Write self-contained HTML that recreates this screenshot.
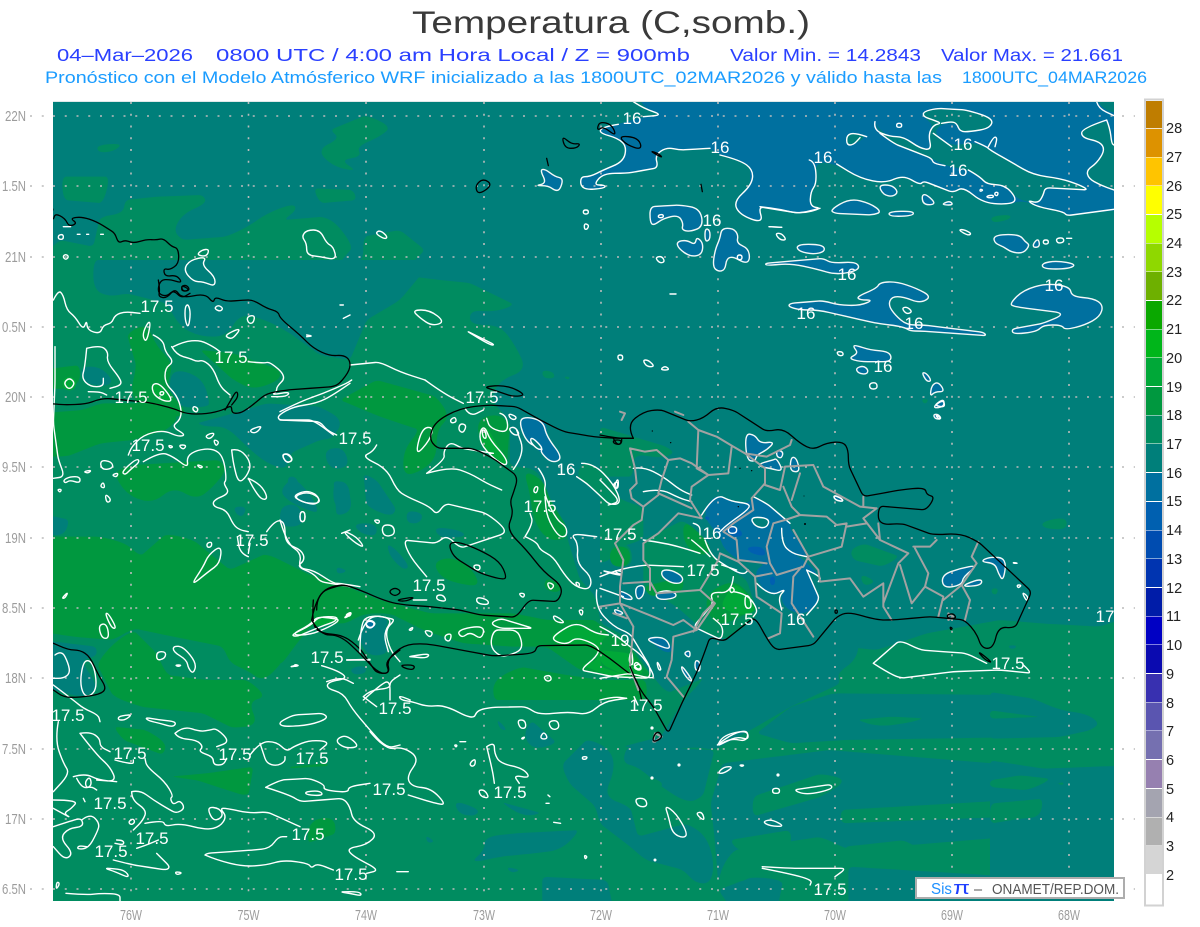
<!DOCTYPE html>
<html lang="es"><head><meta charset="utf-8"><title>Temperatura</title>
<style>
html,body{margin:0;padding:0;background:#fff;width:1200px;height:927px;overflow:hidden}
svg{display:block;font-family:"Liberation Sans",sans-serif}
.T{fill:#007f7a}.G{fill:#008c60}.D{fill:#00983f}.B{fill:#00a838}.U{fill:#00709f}.V{fill:#0060b0}
.w,.wu,.wd,.wb,.wt,.k,.e{vector-effect:non-scaling-stroke;stroke-linejoin:round;stroke-linecap:round}
.w{fill:none;stroke:#fff;stroke-width:1.4}
.wu{fill:#00709f;stroke:#f4f8f8;stroke-width:1.4}
.wd{fill:#00983f;stroke:#fff;stroke-width:1.4}
.wb{fill:#00a838;stroke:#fff;stroke-width:1.4}
.wt{fill:#007f7a;stroke:#fff;stroke-width:1.4}
.k{fill:none;stroke:#000;stroke-width:1.3}
.e{fill:none;stroke:#a2a2a2;stroke-width:2}
.lb text{fill:#fff;font-size:17px;text-anchor:middle}
.ax text{fill:#9c9c9c;font-size:14.5px}
.cb text{fill:#222;font-size:14.5px}
</style></head><body>
<svg width="1200" height="927" viewBox="0 0 1200 927" xmlns="http://www.w3.org/2000/svg">
<defs><clipPath id="m"><rect x="53" y="102" width="1061" height="799"/></clipPath></defs>

<text x="412" y="33" font-size="31.5" fill="#3a3a3a" textLength="398" lengthAdjust="spacingAndGlyphs">Temperatura (C,somb.)</text>
<g font-size="17.5" fill="#2a40ff">
<text x="57" y="61" textLength="136" lengthAdjust="spacingAndGlyphs">04–Mar–2026</text>
<text x="216" y="61" textLength="474" lengthAdjust="spacingAndGlyphs">0800 UTC / 4:00 am Hora Local / Z = 900mb</text>
<text x="730" y="61" textLength="191" lengthAdjust="spacingAndGlyphs">Valor Min. = 14.2843</text>
<text x="941" y="61" textLength="182" lengthAdjust="spacingAndGlyphs">Valor Max. = 21.661</text>
</g>
<g font-size="16.800" fill="#1a9cff">
<text x="45" y="83" textLength="897" lengthAdjust="spacingAndGlyphs">Pronóstico con el Modelo Atmósferico WRF inicializado a las 1800UTC_02MAR2026 y válido hasta las</text>
<text x="962" y="83" textLength="185" lengthAdjust="spacingAndGlyphs">1800UTC_04MAR2026</text>
</g>

<rect x="53" y="101" width="1061" height="1" fill="#dfe8e8"/>
<g clip-path="url(#m)" id="map">
<rect x="53" y="102" width="1061" height="799" class="T"/>

<!-- main green -->
<g transform="scale(.33333)">
<path class="G" d="M100,790 180,720 280,740 300,650 370,640 375,600 470,590 610,585 620,610 550,640 520,690 545,720 680,710 745,680 800,640 880,610 890,630 850,660 970,650 1010,670 1060,740 1000,810 1090,780 1090,710 1200,690 1275,750 1200,825 1320,840 1410,849 1545,915 1485,936 1410,930 1410,975 1500,975 1545,1035 1581,1110 1500,1140 1470,1200 1530,1260 1530,1401 1611,1404 1641,1479 1701,1581 1701,1611 1740,1740 1791,1791 1800,1869 1881,1911 1899,1941 1950,2019 2000,2080 2121,2031 2140,2000 2301,1960 2331,1920 2631,1950 2781,1900 3000,1860 3120,1870 3300,1880 3470,1820 3500,2800 100,2800Z"/>
<path class="G" d="M290,435 370,430 340,455 295,458Z M185,530 330,530 310,610 190,600Z M940,565 1060,570 1070,600 960,610Z M990,390 1100,345 1175,380 1140,410 1070,440 1085,470 1020,480 1075,515 1000,500 950,450 1020,415Z"/>
</g>
<g transform="translate(470,95) scale(.33333)">
<path class="G" d="M215,825 250,830 255,850 220,850Z M280,845 300,845 295,855Z"/>
</g>
<!-- teal pockets west -->
<g transform="translate(0,280) scale(.33333)">
<path class="T" d="M280,-60 280,30 330,50 380,40 500,70 540,140 600,170 680,170 720,100 800,120 870,160 960,225 1050,240 1100,120 1200,60 1300,-60Z"/>
<path class="T" d="M510,280 550,270 610,300 630,370 620,380 550,385 510,350Z M240,260 300,260 340,300 320,320 250,310Z"/>
<path class="T" d="M590,430 700,400 800,370 960,380 1030,420 1000,475 960,480 870,520 860,570 800,550 740,500 680,440 620,440Z"/>
<path class="T" d="M970,510 1030,500 1050,560 990,570Z M840,630 880,590 930,640 960,700 920,690 860,660Z M700,680 740,680 730,710 710,705Z M120,700 210,720 190,770 120,760Z M1000,600 1050,610 1050,700 1000,680Z"/>
</g>
<g transform="translate(0,600) scale(.33333)">
<path class="T" d="M560,50 605,55 600,65 565,65Z M550,298 595,298 590,315 555,315Z M1050,205 1095,195 1100,220 1060,225Z M120,120 290,140 290,170 240,180 290,250 280,280 240,290 120,260Z"/>
</g>
<!-- deep green -->
<g transform="translate(0,280) scale(.33333)">
<path class="D" d="M120,270 240,255 240,310 190,330 120,320Z"/>
<path class="D" d="M380,160 440,130 470,200 520,250 500,320 560,400 500,420 430,390 390,340 410,260Z"/>
<path class="D" d="M600,210 700,220 840,270 840,300 760,330 700,300Z"/>
<path class="D" d="M120,400 250,390 300,370 480,370 540,410 500,450 400,480 300,490 200,530 120,530Z"/>
<path class="D" d="M350,570 400,555 660,540 680,570 640,620 590,660 520,620 460,670 390,650 350,600Z"/>
<path class="D" d="M120,770 300,770 380,790 420,830 500,760 580,780 690,870 800,820 880,860 960,900 1050,920 1050,1010 120,1010Z"/>
<circle class="B" cx="208" cy="311" r="20"/>
<path class="B" d="M455,312 480,310 520,362 495,365 460,345Z"/>
</g>
<g transform="translate(0,600) scale(.33333)">
<path class="D" d="M120,-40 880,-40 925,70 870,100 845,190 790,245 740,210 690,190 670,140 520,110 400,85 340,120 220,110 120,95Z"/>
<path class="D" d="M290,190 340,130 400,90 470,160 500,225 620,240 745,240 800,290 745,305 775,375 700,385 610,340 420,320 340,290Z"/>
<path class="D" d="M340,380 440,390 500,430 490,465 370,420Z M510,530 620,520 760,500 745,590 680,570 590,540Z M930,660 1000,650 1010,700 920,730Z M870,500 980,490 985,498 870,505Z"/>
</g>
<g transform="translate(280,380) scale(.33333)">
<path class="T" d="M20,290 50,290 60,330 30,340Z M160,300 200,310 220,390 170,410Z M250,280 290,300 350,390 330,410 260,380Z M380,390 430,400 420,430 380,430Z M220,430 290,430 290,470 240,460Z M320,490 350,510 390,560 370,570 330,530Z M0,380 50,370 70,410 60,440 0,440Z M170,560 200,570 190,580 170,580Z M460,440 540,450 560,470 480,475Z"/>
<path class="D" d="M180,60 290,0 470,50 510,110 470,150 470,230 430,270 370,290 370,210 420,150 300,110Z"/>
<path class="D" d="M590,120 650,100 690,130 680,260 640,230 600,190Z"/>
<path class="D" d="M460,545 520,530 580,570 600,620 530,610 480,590Z"/>
<path class="D" d="M730,270 790,300 810,360 860,440 860,480 800,480 760,420 750,340Z"/>
<path class="D" d="M800,590 850,620 830,640 790,625Z"/>
<path class="D" d="M0,560 150,600 300,660 450,700 700,700 800,720 950,720 1000,780 1110,880 1100,900 1000,890 900,870 800,800 700,800 550,790 430,750 330,700 250,700 200,730 100,730 50,790 0,860Z"/>
<path class="D" d="M640,900 720,860 830,880 960,900 1100,900 1100,960 640,960Z"/>
<path class="D" d="M410,170 470,130 470,205 410,230Z"/>
<path class="G" d="M905,250 940,250 1000,310 1030,370 990,375 920,310 890,290Z"/>
<path class="G" d="M995,500 1050,490 1060,560 990,560Z"/>
<path class="B" d="M810,765 850,750 880,730 960,760 1010,780 1110,880 1090,895 1000,890 900,855 960,840 940,800 830,795Z"/>
<path class="B" d="M100,710 170,710 180,720 100,745Z"/>
<path class="B" d="M600,150 620,140 680,240 680,260 640,235 600,190Z"/>
<path class="T" d="M240,740 270,710 330,715 310,760 330,820 270,830 240,790Z"/>
<path class="U" d="M255,725 285,725 285,745 260,748Z"/>
<path class="U" d="M715,115 745,110 800,125 800,170 845,230 820,250 780,215 740,180Z"/>
<path class="U" d="M1100,770 1130,770 1180,800 1170,820 1140,810Z"/>
</g>
<!-- DR interior greens + south bands -->
<g transform="translate(600,400) scale(.33333)">
<path class="G" d="M0,80 100,110 200,140 225,160 180,175 100,160 100,230 0,230Z"/>
<path class="G" d="M750,450 790,430 900,470 850,500 760,480Z M780,520 830,545 790,560Z M1175,565 1195,565 1190,585 1175,580Z M1325,365 1400,350 1400,390 1330,385Z"/>
<path class="G" d="M130,420 250,360 300,400 350,480 440,540 470,630 470,650 380,720 320,700 230,620 130,560Z"/>
<path class="G" d="M0,250 60,300 130,320 130,420 60,440 30,480 0,490Z"/>
<path class="D" d="M250,360 300,400 340,450 300,470 250,430Z M30,440 90,440 90,500 30,500Z"/>
<path class="D" d="M320,580 395,540 440,570 475,630 440,640 360,680 320,640Z"/>
<path class="B" d="M385,575 405,550 440,580 470,630 440,645 400,640 360,620Z"/>
<path class="D" d="M0,720 40,700 90,740 150,830 90,830 0,800Z M130,560 250,530 250,570 150,590Z"/>
<path class="B" d="M0,750 90,760 140,820 85,830 40,810 0,790Z"/>
</g>
<g transform="translate(370,650) scale(.38270,.33333)">
<path class="T" d="M890,-30 1280,-30 1270,30 1220,70 1230,100 1100,170 1010,230 900,300 850,290 790,300 660,290 760,260 820,150 870,90Z"/>
<path class="T" d="M670,290 900,300 870,440 830,460 760,410 700,350 660,340Z"/>
<path class="T" d="M500,345 570,265 630,300 640,360 610,440 680,470 700,560 830,520 880,560 900,640 890,700 850,700 820,660 720,630 680,590 600,520 590,470 520,400Z"/>
<path class="T" d="M920,340 1200,300 1680,345 1680,560 1250,600 1180,560 950,600 920,650 910,700 900,560 890,460Z"/>
<path class="T" d="M1210,130 1680,135 1680,262 1240,270 1100,280 1010,250 1100,170Z"/>
<path class="T" d="M450,680 620,690 640,800 450,800Z M1000,680 1080,690 1060,800 960,800 910,720Z M1250,650 1680,680 1680,800 1250,800Z"/>
<path class="T" d="M220,450 290,480 270,500 230,490Z M340,455 450,490 400,500Z M300,560 380,550 550,540 500,600 430,610 340,620 260,640 300,600Z M420,210 490,280 430,300 400,260Z M145,555 170,575 150,580Z M355,650 395,660 370,670Z M330,205 360,240 340,240Z"/>
<path class="G" d="M1270,210 1360,200 1450,205 1400,220 1330,230Z M1000,440 1180,370 1250,390 1180,440 1000,500Z M1230,480 1680,450 1680,500 1230,520Z M1240,590 1400,570 1450,610 1240,620Z M940,570 1100,540 1100,590 960,600Z M700,370 780,400 720,440 640,390Z M950,660 1000,680 960,700Z"/>
</g>
<g transform="translate(1000,627) scale(.33333)">
<path class="T" d="M-30,195 100,215 180,250 260,260 300,290 270,310 180,330 -30,335Z"/>
<path class="G" d="M-30,250 120,270 -30,275Z"/>
<path class="T" d="M-30,400 130,425 400,415 400,900 -30,900Z"/>
<path class="G" d="M-30,460 60,445 150,455 130,470 80,490 -30,480Z M-30,530 130,515 120,570 60,575 -30,590Z M170,470 190,465 190,475Z"/>
<path class="T" d="M25,55 50,55 45,65 30,65Z"/>
</g>

<!-- blue NE -->
<g transform="translate(470,95) scale(.33333)">
<path class="U" d="M490,-30 920,-30 920,335 865,335 880,385 810,360 790,320 845,270 850,225 810,195 750,180 720,160 630,165 590,157 555,180 565,218 470,235 400,235 370,270 405,270 405,280 335,285 330,245 360,245 400,225 460,200 470,155 445,130 385,113 400,95 445,88 520,65 580,60 520,40Z"/>
</g>
<g transform="translate(760,95) scale(.33333)">
<path class="U" d="M-30,-30 1010,-30 1015,40 1100,62 1100,343 920,362 910,350 830,335 800,320 770,320 755,328 670,325 610,275 580,293 490,258 480,270 430,240 375,265 300,250 230,207 165,200 170,265 152,290 150,335 188,340 120,357 60,343 -30,335Z"/>
<path class="T" d="M345,80 360,105 390,125 430,125 480,160 515,165 505,120 520,90 490,65 490,50 530,40 620,45 700,70 690,100 630,110 600,110 590,85 545,85 520,115 575,155 640,140 690,165 760,205 820,240 900,250 960,270 985,285 855,278 850,300 835,325 800,320 770,310 735,270 680,268 660,245 625,225 555,212 515,190 400,145 360,115Z"/>
<path class="T" d="M1040,75 965,100 965,128 1020,140 1035,165 1010,205 980,225 985,250 1020,270 1100,295 1100,150 1055,145 1050,100Z"/>
<path class="T" d="M260,120 285,113 320,125 280,150 260,150Z"/>
<path class="G" d="M690,365 750,358 752,372 700,385Z M485,912 505,912 500,925 490,925Z"/>
</g>
<!-- central DR blue -->
<g transform="translate(600,400) scale(.33333)">
<path class="U" d="M305,345 345,280 395,305 445,310 460,290 500,310 570,370 575,395 545,390 545,440 600,470 660,525 620,515 660,600 620,645 560,630 540,590 560,570 515,590 475,550 465,510 500,490 420,485 370,445 360,410Z"/>
<path class="V" d="M370,380 420,385 430,410 395,410Z M440,440 490,440 500,470 450,460Z M510,530 525,530 525,555 510,555Z M310,350 330,350 325,365Z"/>
<path class="T" d="M450,350 510,355 500,385 465,380Z"/>
<path class="U" d="M545,400 560,370 580,400 625,470 600,470 560,450Z"/>
<path class="wu" d="M435,100 465,105 480,130 525,125 500,150 470,165 465,185 440,180Z M530,150 550,155 545,175 530,170Z M480,190 520,180 530,175 550,215 510,205 480,200Z M575,170 590,175 600,215 575,215 570,195Z M700,285 725,295 730,305 705,300Z M185,510 215,510 250,530 245,550 215,550 185,530Z M165,580 200,570 230,580 225,595 175,600Z M1025,525 1080,505 1135,495 1090,530 1085,555 1030,565Z M1140,485 1170,470 1220,475 1210,545 1195,520 1185,490Z M1090,555 1145,535 1145,555 1100,560Z M135,715 195,710 215,750 170,735Z M250,760 270,750 270,775Z M285,780 300,785 300,815 285,810Z M245,795 280,845 265,840 245,810Z M40,625 75,640 50,645Z M105,560 135,555 130,590 110,600Z M55,570 90,585 100,600 65,595Z"/>
</g>

<!-- grid -->
<g stroke="#bcbcbc" stroke-width="1.6" stroke-dasharray="2 9.75" fill="none">
<line x1="53" y1="116" x2="1114" y2="116"/><line x1="53" y1="186" x2="1114" y2="186"/><line x1="53" y1="257" x2="1114" y2="257"/><line x1="53" y1="327" x2="1114" y2="327"/><line x1="53" y1="397" x2="1114" y2="397"/><line x1="53" y1="467" x2="1114" y2="467"/><line x1="53" y1="538" x2="1114" y2="538"/><line x1="53" y1="608" x2="1114" y2="608"/><line x1="53" y1="678" x2="1114" y2="678"/><line x1="53" y1="749" x2="1114" y2="749"/><line x1="53" y1="819" x2="1114" y2="819"/><line x1="53" y1="889" x2="1114" y2="889"/>
<line x1="131" y1="102" x2="131" y2="901"/><line x1="248.500" y1="102" x2="248.500" y2="901"/><line x1="366" y1="102" x2="366" y2="901"/><line x1="484" y1="102" x2="484" y2="901"/><line x1="601" y1="102" x2="601" y2="901"/><line x1="718" y1="102" x2="718" y2="901"/><line x1="835" y1="102" x2="835" y2="901"/><line x1="952" y1="102" x2="952" y2="901"/><line x1="1069" y1="102" x2="1069" y2="901"/>
</g>

<!-- NE contours -->
<g transform="translate(470,95) scale(.33333)">
<path class="w" d="M490,20 520,40 580,60 520,65 M445,88 400,95 385,113 445,130 470,155 460,200 400,225 360,245 330,245 335,285 405,280 405,270 370,270 400,235 470,235 565,218 555,180 590,157 630,165 720,160 M750,180 810,195 850,225 845,270 790,320 810,360 880,385 865,335 990,355 1050,340 M897,395 935,397 M600,597 618,597"/>
<path class="wu" d="M210,225 225,222 255,245 280,250 270,285 255,287 235,272 195,272 230,265Z M540,335 630,330 690,340 700,395 660,410 635,405 640,385 625,360 580,370 550,392 540,380Z M705,400 720,405 720,435 705,440Z M620,440 650,435 675,450 680,425 700,445 695,480 660,485 625,460Z M755,400 790,400 805,420 800,445 835,460 840,495 825,505 790,485 770,490 765,525 745,530 728,515 735,465 750,430Z"/>
<path class="w" d="M555,488 575,483 585,500 570,505Z M915,415 935,415 950,435 930,435Z M340,345 355,345 355,357 340,357Z M343,385 357,390 352,403 343,403Z M443,780 458,780 458,795 445,795Z M518,795 535,795 555,815 530,815Z M570,825 585,812 600,825Z M802,480 816,480 816,494 802,494Z M565,360 580,358 580,368 565,368Z"/>
<path class="k" d="M382,98 390,80 425,88 440,125 400,95 385,105Z M445,122 505,128 517,165 470,150Z M275,122 305,148 332,145 320,160 285,160Z M230,190 235,212 M15,272 40,250 68,270 25,300Z M693,268 697,290 M538,167 580,190 565,175Z"/>
</g>
<g transform="translate(760,95) scale(.33333)">
<path class="w" d="M345,80 340,105 390,125 430,125 480,160 515,165 505,120 520,90 545,85 520,75 490,65 490,50 530,40 620,45 700,70 690,100 630,110 600,110 590,85 575,80 545,85 M520,115 575,155 M645,140 680,155 690,165 760,205 820,240 900,250 960,270 985,285 855,278 850,300 835,325 800,315 830,335 910,350 920,362 1062,343 M1010,20 1015,40 1062,62 M1040,75 965,100 965,128 1020,140 1035,165 1010,205 980,225 985,250 1020,270 1062,285 M1040,75 1050,100 1055,145 1062,150 M360,115 400,145 515,190 520,205 555,212 M625,225 660,245 680,268 735,270 770,310 755,328 670,325 610,275 580,293 490,258 480,270 430,240 375,265 300,250 230,207 M148,195 165,200 170,265 152,290 150,335 188,340 120,357 60,343 0,335 M320,125 285,113 260,120 260,150 280,150 300,128 M685,155 700,125 712,128 705,155 M28,395 65,397"/>
<path class="wu" d="M210,345 270,310 330,325 365,350 340,360 225,355Z M108,455 130,447 190,450 195,470 160,478 120,470Z M15,505 190,490 215,505 290,500 300,525 230,540 170,522 90,505 20,512Z M355,270 395,270 415,290 400,305 370,300Z M385,350 460,348 460,362 390,365Z M485,300 500,298 530,328 490,330Z M550,325 570,318 580,330 550,330Z M700,425 730,418 780,420 795,440 810,450 790,475 755,472 730,455 705,445Z M820,445 835,430 840,455 820,458Z M845,505 890,497 950,508 925,522 850,522Z M750,625 790,585 860,565 930,575 935,605 1000,610 1030,630 1020,665 975,690 915,705 905,690 850,690 830,710 760,718 755,702 850,685 920,655 840,645 760,635Z M290,605 350,580 360,562 410,560 470,580 515,605 480,625 430,605 395,605 385,630 405,660 440,690 490,690 670,712 680,722 480,708 450,708 430,695 350,685 240,660 175,645 120,645 85,635 90,625 190,617 235,630 300,632 340,615 300,615Z M285,750 330,765 390,770 395,800 345,800 300,800 265,790 295,775 280,755Z M287,820 310,812 325,825 320,838 295,835Z M485,832 500,835 515,858 500,860Z M515,870 535,860 555,890 525,890 510,905Z M530,925 552,912 552,935 520,940Z M520,958 535,958 545,972 525,972Z"/>
<path class="wt" d="M425,640 440,635 458,650 440,658Z"/>
<path class="w" d="M595,405 610,403 635,415 625,422Z M230,770 248,770 250,782 235,782Z M410,85 425,85 425,97 410,97Z M850,435 865,435 865,447 850,447Z M888,430 910,428 912,442 892,445Z M328,865 350,862 352,882 330,882Z M660,282 670,285 660,290Z M680,303 700,300 700,308 682,308Z M705,292 715,292 712,303 704,300Z M920,430 935,430"/>
</g>

<!-- contours west -->
<g transform="scale(.33333)">
<path class="w" d="M905,710 920,690 960,690 980,730 1000,740 1010,780 960,770 920,765 920,730Z M550,810 570,780 620,770 605,795 645,830 645,860 610,845 580,845Z M590,765 605,750 628,747 620,770Z M1125,700 1140,690 1163,710 1155,718Z M175,705 190,703 190,718 175,718Z M188,770 197,762 207,770 197,780Z M190,680 212,680 M232,703 240,703 M260,703 266,703 M302,703 310,703"/>
<path class="w" d="M1236,930 1290,930 1335,966 1296,978 1260,954Z M1395,990 1485,1035 1470,1035Z M1050,1095 1140,1086 1200,1116 1275,1140"/>
<path class="k" d="M105,620 110,608 140,612 165,630 138,640 160,662 165,640 195,655 207,680 232,670 210,655 245,650 290,665 330,690 345,700 355,730 375,720 400,730 440,718 470,720 490,715 515,740 535,745 537,790 510,810 490,805 495,830 530,825 548,850 510,838 480,840 472,880 500,890 520,870 545,895 570,880 M543,858 560,855 570,870 550,875Z"/>
</g>
<g transform="translate(0,280) scale(.33333)">
<path class="w" d="M160,60 175,30 190,45 200,90 225,110 250,150 260,120 262,150 300,162 310,135 335,130 345,105 375,95 420,100 M460,165 490,180 495,215 522,245 495,265 495,310 530,345 545,390 540,420 515,440 558,465 535,470 490,450 430,465 395,500 385,525 M520,200 550,185 600,180 640,200 660,215 M515,200 530,225 570,235 590,245 610,240 640,265 660,320 690,345 M745,245 790,250 810,245 860,290 830,320 830,335 815,345 870,335 860,350 815,350 M165,200 165,310 160,430 175,540 195,590 160,595 M260,205 300,195 325,215 320,245 360,295 365,315 330,325 M260,205 255,260 245,295 270,320 310,320 310,295 M265,335 300,335 320,345 M1050,310 1000,345 950,370 880,380 835,405 835,420 960,425 980,450 1010,465 M430,545 480,515 520,530 565,565 560,530 590,510 640,505 670,530 680,600 670,610 690,640 640,660 640,680 680,690 700,735 720,750 745,755 M745,830 720,820 712,770 M745,820 750,790 M800,755 825,720 855,725 855,790 905,810 915,840 890,860 940,880 960,905 1050,920 M695,510 720,505 755,550 740,590 715,610 700,550 695,510 M745,595 780,610 805,655 785,660 760,625 745,595 M845,525 860,520 880,540 860,550Z M878,648 915,632 945,640 960,660 945,675 905,665Z M900,695 915,695 915,725 900,725Z M1025,760 1050,750 M620,790 635,785 635,800 622,803Z M570,920 610,860 625,825 665,795 660,850 625,875Z M185,955 205,935 195,955Z M300,540 335,545 340,565 305,570Z M250,575 275,570 265,580Z M335,585 355,578 350,592Z M365,575 410,535 420,545 390,570 375,585Z M190,600 210,590 240,590 240,610 210,600 195,610Z M310,605 315,625 300,620Z M315,640 335,660 320,670Z M590,553 610,560 600,565Z M630,460 645,460 630,478 615,470Z M640,478 658,485 648,500Z M535,495 560,495 550,510Z M505,495 520,500 510,505Z M555,80 565,72 572,100 565,145 555,120Z M655,75 670,85 660,95 642,85Z M675,165 725,142 700,175 685,175Z M740,110 765,105 760,130 745,130Z M580,378 595,385 590,398 578,390Z M750,450 775,440 785,440 770,458 755,458Z M1030,115 1050,105 M430,155 445,125 452,130 440,185 430,175Z M455,312 480,310 520,362 495,365 460,345Z M480,335 492,335 490,345 480,345Z M190,310 208,292 226,310 208,330Z M172,628 185,628 180,638Z M920,165 940,168 920,170 M1020,75 1030,75"/>
<path class="k" d="M475,0 480,30 475,50 500,55 525,25 545,55 615,40 640,70 645,50 680,65 730,60 760,60 800,85 835,95 840,115 900,165 940,205 990,228 1030,225 1050,240 1050,270 1020,310 1000,320 860,330 800,340 770,365 745,385 720,400 695,400 695,375 670,390 620,402 560,402 520,385 450,368 320,355 290,360 260,372 190,375 150,370 105,380 M675,390 690,365 710,330 715,350 695,375 M545,15 570,30 545,35Z M950,990 950,940 1020,915 1050,915"/>
</g>
<g transform="translate(0,600) scale(.33333)">
<path class="w" d="M165,165 185,150 205,190 210,220 190,235 160,235 M250,185 270,180 285,210 290,265 270,290 250,285 240,245Z M160,255 220,300 250,325 295,345 300,365 M175,365 165,420 190,490 210,520 160,575 M240,400 270,395 300,415 300,440 330,455 M240,400 290,465 330,500 350,545 290,540 M220,530 255,520 295,540 350,545 M345,480 400,495 400,480 M230,535 245,565 275,560 290,570 M255,545 270,530 275,555 260,565Z M160,600 235,600 215,625 190,640 215,655 160,625 M160,680 220,660 245,655 250,680 205,685 180,715 220,760 195,780 160,740 M245,660 270,640 300,670 290,700 265,745 232,748 235,737 260,740 M350,720 370,720 372,735 345,730 M385,665 400,655 405,668 392,675Z M395,575 420,570 460,600 510,630 530,640 555,625 540,600 520,615 510,595 520,588 495,545 440,500 435,475 M395,575 395,600 440,630 430,660 400,690 M410,745 440,735 475,720 M435,670 490,660 495,680 540,670 620,690 660,680 680,650 660,625 680,625 750,640 800,635 900,680 M620,620 640,665 670,650 660,625Z M470,760 490,780 510,800 500,810 400,795 340,780 M330,805 375,810 390,835 345,815 315,805Z M525,815 548,818 530,825Z M170,845 180,850 168,870Z M198,880 260,885 300,880 360,882 360,903 M470,155 498,155 495,175 470,182Z M520,138 550,140 590,190 580,222 565,205 560,180 520,155Z M525,195 545,195 535,200Z M355,350 380,345 395,345 375,360 355,360Z M435,352 480,360 530,365 520,382 480,370 445,362Z M525,400 550,378 600,395 630,390 650,385 690,425 650,440 M525,400 535,415 590,420 610,440 595,455 640,470 640,495 670,495 680,475 M750,465 780,425 830,425 860,455 880,440 930,420 990,425 960,450 M780,430 790,460 800,490 830,498 855,485 855,470 M840,365 880,345 970,340 985,355 930,375 860,380 840,375Z M1012,415 1040,405 1080,440 1040,445 1012,430Z M797,562 840,540 930,535 975,555 970,570 1045,578 1045,560 1110,550 M797,562 870,585 900,605 1030,595 1050,620 1060,665 1135,700 1100,735 1040,745 1060,770 1140,810 1100,820 M915,575 960,572 970,587 920,585Z M615,765 620,760 760,750 810,745 835,710 860,710 M615,765 650,780 730,800 800,795 850,780 925,790 935,805 950,790 1000,810 M1015,875 1080,875 1085,888 1050,880Z M1040,180 1110,178 M965,197 1010,210 1045,235 985,245 980,265 1030,280 1055,325 1105,385 1160,445 1200,435 M1090,290 1130,320 M1090,290 1110,270 1170,265 1170,245 1200,225 M1075,120 1090,75 1120,45 1170,55 1185,60 1155,90 1170,150 1200,185 M885,193 898,197 880,200Z M870,105 930,75 950,50 1000,55 1020,60 990,80 930,105Z M1035,45 1055,35 1050,50Z M295,75 320,70 328,115 305,115Z M315,40 325,40 350,85 335,85Z M250,595 255,605"/>
<path class="wu" d="M1100,65 1115,60 1128,72 1112,85 1098,75Z"/>
<path class="k" d="M105,98 120,120 150,125 205,150 240,150 270,170 295,225 320,265 300,283 240,292 190,292 155,265 125,260 108,262 125,252 105,245 M940,0 935,70 960,100 1030,105 1080,145 1130,220 1170,220 1155,185 1200,150"/>
</g>

<!-- Haiti -->
<g transform="translate(280,380) scale(.33333)">
<path class="w" d="M0,95 60,65 130,40 200,10 215,0 M0,120 100,120 160,165 M290,195 280,215 245,230 320,265 350,330 380,350 450,380 470,405 495,370 620,400 670,440 675,460 540,505 500,465 470,490 370,480 390,530 440,590 M435,0 490,40 550,70 M555,85 570,110 610,90 M405,230 425,145 460,140 450,180Z M510,120 525,110 530,125 515,130Z M540,130 560,135 550,160 535,150Z M660,100 680,105 685,160 630,145 620,115 M685,100 710,110 705,120 690,115Z M685,145 705,140 720,165 700,165Z M440,280 495,240 490,215 510,185 545,205 640,220 M440,280 510,260 570,280 620,310 665,330 M700,268 735,220 710,150 M775,265 800,300 790,340 830,420 860,440 860,470 835,470 800,410 795,350 M735,470 760,430 750,400 M735,470 770,485 780,510 820,530 850,580 885,620 930,630 935,590 890,550 895,490 870,460 950,470 M950,630 945,680 1000,740 1050,760 1110,860 1110,895 1000,890 900,870 950,830 960,800 890,770 860,795 815,780 830,760 890,725 945,760 985,765 M5,225 25,220 40,240 20,250Z M40,350 80,335 115,350 120,370 75,370Z M60,395 75,395 75,425 60,425Z M280,420 300,420 295,433Z M305,435 340,435 345,465 310,470Z M185,450 230,470 255,505 220,485Z M0,420 20,490 65,520 55,565 100,570 160,610 180,610 240,620 M400,660 440,660 M470,645 490,645 500,665 470,660Z M590,650 625,660 625,675 590,670Z M715,640 735,640 730,655Z M800,605 825,615 810,632Z M885,605 900,610 895,625Z M895,690 910,690 905,710Z M818,705 840,715 855,730 825,725Z M32,765 95,735 115,710 175,710 165,725 135,735 50,770Z M190,715 215,695 205,710Z M240,820 240,730 270,705 340,715 310,760 325,815 M1070,845 1085,860 1075,870 1060,855Z M385,750 400,740 395,752Z M430,750 460,755 450,775Z M495,765 515,760 510,785 495,780Z M530,750 615,735 605,780 570,755 545,775Z M630,730 660,715 760,745 660,745Z M640,750 630,800 660,830 690,825 725,810 725,780 710,750 670,750Z M790,890 810,885 815,900 800,905Z M385,830 450,820 440,835 395,830Z M30,860 55,855 40,860Z M200,840 270,840 M140,905 180,890 220,910 M250,960 300,915 330,900 330,960 M905,250 940,250 1000,310 1025,370 990,375 920,310 890,290 M1000,310 1015,305 1010,325 1005,325Z M1000,570 1030,575 1020,585Z M765,320 775,320 770,340 760,335Z M600,150 615,140 630,180 680,235 680,260 640,235 600,190Z M605,150 615,150 620,175 610,175Z M580,555 600,555 600,570 585,570Z M258,728 270,722 285,730 275,745 260,742Z"/>
<path class="wu" d="M715,120 745,110 790,125 800,170 850,235 815,250 780,215 790,205 740,190Z"/>
<path class="wt" d="M755,170 790,205 775,210 750,185Z"/>
<path class="k" d="M95,720 110,640 180,610 240,630 320,665 375,675 450,680 540,690 600,705 710,712 745,660 835,665 850,620 790,575 740,510 680,450 700,400 690,365 700,340 715,290 680,265 640,235 580,205 470,205 447,175 465,125 540,85 620,75 710,80 790,125 850,155 940,170 1000,175 1060,175 M95,720 120,765 180,765 240,820 295,880 330,880 320,840 370,795 430,790 490,800 640,828 690,825 765,820 770,797 930,795 990,835 1040,875 1070,895 1085,960 M505,490 535,485 600,510 660,545 680,590 670,600 600,580 560,555 520,530Z M610,20 680,15 740,45 700,50Z M325,635 345,622 365,635 345,650Z M345,660 410,650 375,665Z M360,855 405,855 400,870 375,865Z"/>
<path class="k" d="M1000,175 1010,195 1025,190 1025,175"/>
</g>

<!-- DR -->
<g transform="translate(600,400) scale(.33333)">
<path class="w" d="M1020,20 1005,15 1030,0 1035,20Z M1005,45 1020,50 1020,60Z M100,205 130,200 190,230 240,270 275,285 M130,275 180,265 240,295 275,305 M0,240 30,270 60,305 25,315 M45,250 55,235 55,265 45,265Z M450,350 510,355 500,385 465,380Z M280,370 300,375 300,405 M275,420 300,440 330,470 M315,420 330,465 380,500 430,525 445,510 M130,420 200,430 270,450 300,460 M0,530 50,510 130,495 250,500 M365,495 410,510 M400,530 395,580 330,575 340,610 280,680 365,720 370,680 340,655 M400,575 440,580 475,630 460,650 M435,585 450,590 455,625 435,625Z M395,560 405,570 395,580 388,570Z M545,385 545,430 575,460 620,470 M460,290 500,310 570,370 M385,380 410,380 410,400 385,400Z M470,550 510,590 560,565 535,590 545,630 M620,510 660,600 620,645 M620,510 665,530 655,545 M1250,555 1265,555 1255,565Z M1265,575 1285,590 1280,605Z M1240,487 1255,490 1240,490Z M0,680 40,700 90,740 130,770 165,830 150,835 90,820 0,835 M0,900 40,890 80,895 M100,800 120,790 125,810 110,810Z M85,785 95,745 100,800Z M170,780 185,810 175,810Z M0,510 45,520 70,525 50,525Z M0,565 70,590 M350,1035 400,1000 445,990 440,1025 395,1015 355,1035Z M820,790 900,720 960,750 1100,760 1160,790 M1270,795 1298,820 1200,810 1060,815 900,835 860,815 820,790 M700,285 725,295 730,305 705,300Z M305,345 345,280 395,305 445,310 450,325 380,375 360,395"/>
<path class="e" d="M90,145 135,155 170,150 205,180 240,175 275,190 325,225 275,260 270,300 305,355 M205,180 185,240 175,280 275,325 M130,320 175,285 M265,65 295,90 350,110 400,140 435,160 495,205 M295,90 290,205 325,225 385,220 395,140 M495,205 495,250 455,295 460,330 400,370 370,395 410,420 415,480 500,490 M495,255 540,270 555,200 M550,260 575,320 600,345 680,350 710,375 740,370 725,440 625,470 M575,120 570,135 500,170 435,160 M555,200 640,195 670,260 780,320 830,325 M600,220 575,300 M580,390 625,470 610,500 530,525 510,490 500,440 520,370 555,360 600,345 M625,475 655,510 660,545 750,535 790,590 850,550 850,620 875,660 M800,370 740,380 M830,325 790,355 840,420 925,460 895,490 850,610 M900,495 935,610 975,560 1030,590 1015,650 M940,440 990,440 1010,420 M945,445 985,520 975,560 M1135,425 1115,470 1130,490 1085,555 1110,600 1095,660 M1085,555 1030,600 M840,420 835,370 M605,500 580,530 575,610 640,710 M515,520 465,530 470,590 545,640 540,700 505,715 M70,550 150,545 170,580 300,570 345,610 290,690 M130,430 130,480 150,505 150,570 M130,430 175,400 235,340 305,355 M360,460 415,485 465,530 M0,620 60,610 160,650 220,675 250,660 290,690 220,710 215,780 200,830 250,890 M100,680 90,800 115,870 M90,145 105,205 110,250 90,270 95,295 130,320 125,360 100,375 45,430 70,480 60,560 60,610 100,680 M340,610 310,640 280,695 M360,460 355,480 300,570 M40,640 80,655 M160,1025 165,1000 185,1010 165,1025Z M60,35 75,40 65,60 M225,35 250,45 M790,290 790,320 M1045,640 1060,650 1045,660Z"/>
<path class="k" d="M100,115 80,75 130,35 180,28 270,65 310,55 350,20 400,30 500,95 550,85 600,130 640,150 680,128 730,125 745,150 745,195 790,290 900,270 975,262 980,285 1005,290 980,330 835,318 835,375 905,370 1000,405 1080,400 1135,425 1295,575 1245,685 1195,680 1180,745 1145,745 1130,700 1095,660 990,650 880,660 830,660 745,635 710,650 640,735 525,750 500,715 465,650 370,725 330,710 320,740 290,820 250,900 205,1000 160,920 120,870 90,800 M1130,750 1180,790 1155,780Z M1040,645 1060,640 1070,655 1045,655Z M1050,680 1058,685 1052,690Z M0,105 50,115 100,115 M40,120 65,120 60,135 40,130Z M705,630 712,630 712,640 705,640Z"/>
<g fill="#000"><circle cx="157" cy="93" r="2"/><circle cx="212" cy="128" r="2"/><circle cx="420" cy="205" r="2"/><circle cx="455" cy="212" r="2"/><circle cx="612" cy="288" r="1.5"/><circle cx="615" cy="372" r="3"/><circle cx="415" cy="320" r="2"/></g>
</g>

<!-- south -->
<g transform="translate(370,650) scale(.38270,.33333)">
<path class="w" d="M105,150 75,135 80,150 110,155 150,170 195,165 270,210 280,180 320,172 410,170 440,195 520,185 570,195 610,155 670,145 M0,245 40,300 85,290 130,325 95,380 110,410 160,415 200,465 170,460 100,435 M305,290 325,275 325,310 340,340 400,355 420,385 375,375 390,400 M305,290 320,360 325,400 M692,445 720,445 725,470 700,470Z M770,465 800,490 830,550 820,565 790,550 780,500Z M850,490 868,485 875,515Z M905,290 925,255 985,240 990,270 960,260 930,275Z M908,370 925,350 950,350 925,370Z M1105,420 1205,403 1208,418 1140,435Z M1025,515 1050,508 1085,530 1045,528Z M1025,650 1100,655 1245,655 1215,680 M1025,655 1100,672 1155,690 1150,705 M385,210 405,210 408,235 392,235Z M465,215 490,210 495,235 475,240Z M445,260 455,245 465,265 450,268Z M395,265 405,260 400,268Z M283,420 300,420 312,445 290,440Z M260,340 275,325 275,345 265,350Z M1052,415 1070,415 1070,430 1052,430Z M555,320 568,320 565,328 555,328Z M690,140 700,165 M220,285 228,285 225,292Z M235,275 250,275 M70,665 100,665 M465,435 470,440 M460,460 468,460 M480,517 498,520 M560,615 568,620 562,628Z M965,345 978,345 972,350Z"/>
<path class="k" d="M745,250 755,245 765,262 745,275 738,270Z"/>
</g>

<g fill="#fff"><circle cx="679" cy="765" r="1.6"/><circle cx="652" cy="728" r="1.6"/><circle cx="652" cy="778" r="1.6"/><circle cx="655" cy="860" r="1.5"/><circle cx="778" cy="775" r="1.6"/></g>

<!-- contour labels -->
<g class="lb">
<text x="632" y="124">16</text><text x="720" y="153">16</text><text x="823" y="163">16</text><text x="963" y="150">16</text><text x="958" y="176">16</text><text x="712" y="226">16</text><text x="847" y="280">16</text><text x="1054" y="291">16</text><text x="806" y="319">16</text><text x="914" y="329">16</text><text x="883" y="372">16</text><text x="566" y="475">16</text><text x="712" y="539">16</text><text x="796" y="625">16</text>
<text x="157" y="312">17.5</text><text x="231" y="363">17.5</text><text x="131" y="403">17.5</text><text x="148" y="451">17.5</text><text x="355" y="444">17.5</text><text x="482" y="403">17.5</text><text x="540" y="512">17.5</text><text x="620" y="540">17.5</text><text x="703" y="576">17.5</text><text x="429" y="591">17.5</text><text x="737" y="625">17.5</text><text x="252" y="546">17.5</text><text x="1008" y="669">17.5</text><text x="327" y="663">17.5</text><text x="395" y="714">17.5</text><text x="646" y="711">17.5</text><text x="68" y="721">17.5</text><text x="130" y="759">17.5</text><text x="235" y="760">17.5</text><text x="312" y="764">17.5</text><text x="389" y="795">17.5</text><text x="110" y="809">17.5</text><text x="510" y="798">17.5</text><text x="152" y="844">17.5</text><text x="308" y="840">17.5</text><text x="111" y="857">17.5</text><text x="351" y="880">17.5</text><text x="830" y="895">17.5</text>
<text x="620" y="646">19</text><text x="1105" y="622">17</text>
</g>
</g>

<!-- outside ticks -->
<g stroke="#bcbcbc" stroke-width="1.6" stroke-dasharray="2 9.75" fill="none">
<path d="M30,116H53M30,186H53M30,257H53M30,327H53M30,397H53M30,467H53M30,538H53M30,608H53M30,678H53M30,749H53M30,819H53M30,889H53"/>
<path d="M1122,116H1135M1122,186H1135M1122,257H1135M1122,327H1135M1122,397H1135M1122,467H1135M1122,538H1135M1122,608H1135M1122,678H1135M1122,749H1135M1122,819H1135M1122,889H1135"/>
</g>

<!-- axes -->
<g class="ax" text-anchor="end">
<text x="26" y="121" textLength="21" lengthAdjust="spacingAndGlyphs">22N</text><text x="26" y="191" textLength="24" lengthAdjust="spacingAndGlyphs">1.5N</text><text x="26" y="262" textLength="21" lengthAdjust="spacingAndGlyphs">21N</text><text x="26" y="332" textLength="24" lengthAdjust="spacingAndGlyphs">0.5N</text><text x="26" y="402" textLength="21" lengthAdjust="spacingAndGlyphs">20N</text><text x="26" y="472" textLength="24" lengthAdjust="spacingAndGlyphs">9.5N</text><text x="26" y="543" textLength="21" lengthAdjust="spacingAndGlyphs">19N</text><text x="26" y="613" textLength="24" lengthAdjust="spacingAndGlyphs">8.5N</text><text x="26" y="683" textLength="21" lengthAdjust="spacingAndGlyphs">18N</text><text x="26" y="754" textLength="24" lengthAdjust="spacingAndGlyphs">7.5N</text><text x="26" y="824" textLength="21" lengthAdjust="spacingAndGlyphs">17N</text><text x="26" y="894" textLength="24" lengthAdjust="spacingAndGlyphs">6.5N</text>
</g>
<g class="ax" text-anchor="middle">
<text x="131" y="920" textLength="22" lengthAdjust="spacingAndGlyphs">76W</text><text x="248.500" y="920" textLength="22" lengthAdjust="spacingAndGlyphs">75W</text><text x="366" y="920" textLength="22" lengthAdjust="spacingAndGlyphs">74W</text><text x="484" y="920" textLength="22" lengthAdjust="spacingAndGlyphs">73W</text><text x="601" y="920" textLength="22" lengthAdjust="spacingAndGlyphs">72W</text><text x="718" y="920" textLength="22" lengthAdjust="spacingAndGlyphs">71W</text><text x="835" y="920" textLength="22" lengthAdjust="spacingAndGlyphs">70W</text><text x="952" y="920" textLength="22" lengthAdjust="spacingAndGlyphs">69W</text><text x="1069" y="920" textLength="22" lengthAdjust="spacingAndGlyphs">68W</text>
</g>

<!-- legend box -->
<rect x="916" y="878" width="208" height="20" fill="#fff" stroke="#adadad" stroke-width="2"/>
<text x="931" y="894" font-size="16" fill="#1e90ff" textLength="21" lengthAdjust="spacingAndGlyphs">Sis</text>
<text x="953" y="894" font-size="18" fill="#2040ff" textLength="17" lengthAdjust="spacingAndGlyphs">π</text>
<text x="974" y="894" font-size="14.500" fill="#555">–</text>
<text x="992" y="894" font-size="14.500" fill="#555" textLength="127" lengthAdjust="spacingAndGlyphs">ONAMET/REP.DOM.</text>

<!-- colorbar -->
<rect x="1145" y="99.500" width="18" height="806" fill="#fff" stroke="#d2d2d2" stroke-width="2"/>
<g>
<rect x="1146" y="101" width="16" height="27.200" fill="#bf7d00"/><rect x="1146" y="129" width="16" height="28" fill="#dd9200"/><rect x="1146" y="157.500" width="16" height="28" fill="#ffc400"/><rect x="1146" y="186" width="16" height="28" fill="#ffff00"/><rect x="1146" y="215" width="16" height="28" fill="#b6ff00"/><rect x="1146" y="243.500" width="16" height="28" fill="#8fd800"/><rect x="1146" y="272" width="16" height="28" fill="#6eb000"/><rect x="1146" y="301" width="16" height="28" fill="#0aa800"/><rect x="1146" y="329.500" width="16" height="28" fill="#00b61a"/><rect x="1146" y="358" width="16" height="28" fill="#00a838"/><rect x="1146" y="387" width="16" height="28" fill="#00983f"/><rect x="1146" y="415.500" width="16" height="28" fill="#008c60"/><rect x="1146" y="444" width="16" height="28" fill="#007f7a"/><rect x="1146" y="473" width="16" height="28" fill="#00709f"/><rect x="1146" y="502" width="16" height="28" fill="#0060b0"/><rect x="1146" y="530.500" width="16" height="28" fill="#004cb0"/><rect x="1146" y="559" width="16" height="28" fill="#0034b0"/><rect x="1146" y="588" width="16" height="28" fill="#001ca8"/><rect x="1146" y="616.500" width="16" height="28" fill="#0000c4"/><rect x="1146" y="645" width="16" height="28" fill="#0a0ab0"/><rect x="1146" y="674" width="16" height="28" fill="#3830b0"/><rect x="1146" y="702.500" width="16" height="28" fill="#5a55b0"/><rect x="1146" y="731" width="16" height="28" fill="#7570b0"/><rect x="1146" y="760" width="16" height="28" fill="#9680b0"/><rect x="1146" y="789" width="16" height="28" fill="#a4a4b0"/><rect x="1146" y="817.500" width="16" height="28" fill="#b0b0b0"/><rect x="1146" y="846" width="16" height="28" fill="#d5d5d5"/>
</g>
<g class="cb">
<text x="1166" y="133">28</text><text x="1166" y="162">27</text><text x="1166" y="191">26</text><text x="1166" y="219">25</text><text x="1166" y="248">24</text><text x="1166" y="277">23</text><text x="1166" y="305">22</text><text x="1166" y="334">21</text><text x="1166" y="363">20</text><text x="1166" y="392">19</text><text x="1166" y="420">18</text><text x="1166" y="449">17</text><text x="1166" y="478">16</text><text x="1166" y="506">15</text><text x="1166" y="535">14</text><text x="1166" y="564">13</text><text x="1166" y="593">12</text><text x="1166" y="621">11</text><text x="1166" y="650">10</text><text x="1166" y="679">9</text><text x="1166" y="708">8</text><text x="1166" y="736">7</text><text x="1166" y="765">6</text><text x="1166" y="794">5</text><text x="1166" y="822">4</text><text x="1166" y="851">3</text><text x="1166" y="880">2</text>
</g>
</svg>
<script>
(function(){
var ps=document.querySelectorAll('#map path');
function mid(a,b){return ((a[0]+b[0])/2).toFixed(1)+','+((a[1]+b[1])/2).toFixed(1);}
function pt(a){return a[0].toFixed(1)+','+a[1].toFixed(1);}
for(var k=0;k<ps.length;k++){
 var p=ps[k];
 if(p.getAttribute('class')==='e')continue;
 var d=p.getAttribute('d');if(!d)continue;
 var out='',subs=d.split('M');
 for(var s=0;s<subs.length;s++){
  var t=subs[s];if(!t.trim())continue;
  var closed=/Z/i.test(t);
  var n=t.replace(/Z/gi,' ').trim().split(/[\s,]+/).map(Number),a=[],i;
  for(i=0;i+1<n.length;i+=2)a.push([n[i],n[i+1]]);
  if(a.length<3){out+='M'+a.map(pt).join(' L')+(closed?'Z':'');continue;}
  var b=[],L=a.length,m=closed?L:L-1;
  for(i=0;i<m;i++){
   var P=a[i],Q=a[(i+1)%L],dx=Q[0]-P[0],dy=Q[1]-P[1],l=Math.sqrt(dx*dx+dy*dy);
   b.push(P);
   if(l>90){var u=30/l;b.push([P[0]+dx*u,P[1]+dy*u]);b.push([Q[0]-dx*u,Q[1]-dy*u]);}
  }
  if(!closed)b.push(a[L-1]);
  var c=b.length;
  if(closed){
   out+='M'+mid(b[c-1],b[0]);
   for(i=0;i<c;i++)out+='Q'+pt(b[i])+' '+mid(b[i],b[(i+1)%c]);
   out+='Z';
  }else{
   out+='M'+pt(b[0]);
   for(i=1;i<c-1;i++)out+='Q'+pt(b[i])+' '+mid(b[i],b[i+1]);
   out+='L'+pt(b[c-1]);
  }
 }
 p.setAttribute('d',out);
}
})();
</script>
</body></html>
